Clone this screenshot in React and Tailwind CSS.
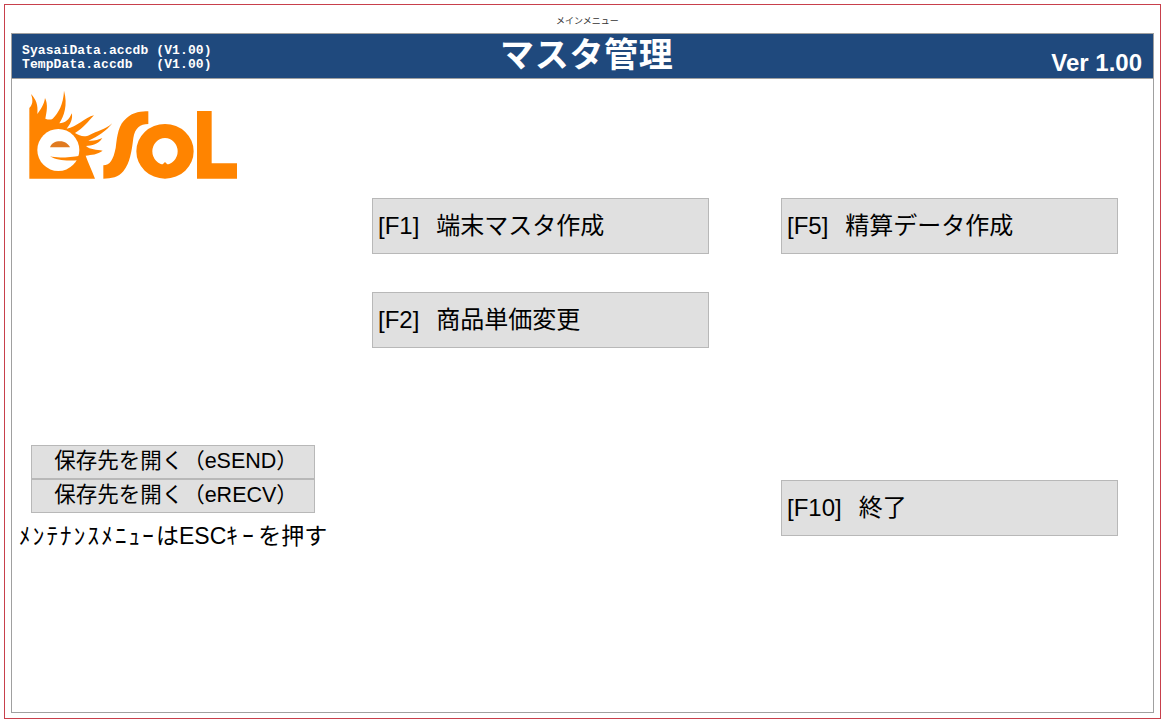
import React from 'react';

const JP = "font-['Liberation_Sans','Noto_Sans_CJK_JP',sans-serif]";

function Logo() {
  return (
    <svg width="225" height="98" viewBox="0 0 675 294" className="block">
      {/* flame */}
      <path
        fill="#ff8400"
        d="M28 272 L28 60 C38 50 40 38 33 18 C48 35 55 50 52 78 C62 65 72 50 75 30 C85 50 80 72 76 92 C85 95 92 96 98 92 C115 75 130 50 132 8 C144 50 132 85 118 106 C135 106 148 95 155 76 C160 92 150 110 140 122 C170 118 195 88 222 82 C205 100 190 120 165 135 C180 145 195 148 210 140 C230 130 255 125 277 106 C258 130 235 145 205 158 C220 160 235 155 247 150 C235 170 215 172 198 174 C210 185 230 185 248 188 C232 200 215 200 197 203 C205 225 215 245 225 272 Z"
      />
      <circle cx="115" cy="186" r="63" fill="#fff" />
      <path fill="#e07a20" d="M90 178 C95 165 105 160 120 160 C135 160 145 168 150 178 Z" />
      <path fill="#ff8400" d="M90 205 C110 211 150 208 180 203 L177 216 C150 219 110 219 90 205 Z" />
      {/* S */}
      <path
        fill="#ff8400"
        d="M385 70 L385 108 C360 108 345 120 340 150 C335 190 330 225 310 250 C295 268 275 272 250 272 L250 232 C270 232 280 215 287 180 C292 140 295 110 320 90 C340 72 365 70 385 70 Z"
      />
      {/* O */}
      <path
        fill="#ff8400"
        fillRule="evenodd"
        d="M349 190 A86 82 0 1 0 521 190 A86 82 0 1 0 349 190 Z M397 190 A38 40 0 1 1 473 190 A38 40 0 1 1 397 190 Z"
      />
      <path fill="#ff8400" d="M425 232 L435 222 L445 232 Z" />
      {/* L */}
      <path fill="#ff8400" d="M531 69 L575 69 L575 226 L651 226 L651 272 L531 272 Z" />
    </svg>
  );
}

function FnButton({ label, text, className = '' }) {
  return (
    <button className={`flex items-center gap-[17px] w-[337px] h-[56px] pl-[5px] bg-[#e0e0e0] border border-[#b8b8b8] text-[24px] text-black ${className}`}>
      <span>{label}</span>
      <span>{text}</span>
    </button>
  );
}

function OpenButton({ text }) {
  return (
    <button className="flex items-center justify-center w-[284px] h-[34px] pb-[2px] pl-[6px] bg-[#e0e0e0] border border-[#b8b8b8] text-[21.5px] text-black whitespace-nowrap">
      {text}
    </button>
  );
}

export default function App() {
  return (
    <div className={`w-[1165px] h-[723px] bg-white p-[4px] ${JP}`}>
      <div className="flex flex-col h-full border border-[#c8404c] px-[6px] pb-[5px]">
        <div className="h-[28px] pl-[545px] pt-[9px] text-[9px] leading-[14px] text-[#333333]">メインメニュー</div>
        <div className="flex flex-col flex-1 border border-[#a0a0a0]">
          <div className="flex h-[44px] bg-[#1f497d] text-white">
            <div className="w-[488px] pl-[10px] pt-[10px] font-['Liberation_Mono',monospace] text-[13px] leading-[14px] tracking-[0.1px] font-bold whitespace-pre">
              <div>SyasaiData.accdb (V1.00)</div>
              <div>TempData.accdb   (V1.00)</div>
            </div>
            <div className="pt-[1px] text-[34px] leading-[40px] font-bold tracking-[0.7px]">マスタ管理</div>
            <div className="ml-auto pr-[11px] pt-[15px] text-[24px] leading-[28px] font-bold">Ver 1.00</div>
          </div>
          <div className="flex flex-1 border-t border-[#a0a0a0]">
            <div className="w-[360px] pl-[8px] pt-[9px]">
              <Logo />
              <div className="flex flex-col mt-[259px] ml-[11px]">
                <OpenButton text="保存先を開く（eSEND）" />
                <OpenButton text="保存先を開く（eRECV）" />
              </div>
              <div className="mt-[7px] -ml-[1px] text-[23px] leading-[32px] text-black whitespace-nowrap">
                <span className="tracking-[2.2px]">ﾒﾝﾃﾅﾝｽﾒﾆｭｰ</span>はESC<span className="tracking-[4.5px]">ｷｰ</span>を押す
              </div>
            </div>
            <div className="w-[409px] pt-[119px]">
              <FnButton label="[F1]" text="端末マスタ作成" />
              <FnButton label="[F2]" text="商品単価変更" className="mt-[38px]" />
            </div>
            <div className="pt-[119px]">
              <FnButton label="[F5]" text="精算データ作成" />
              <FnButton label="[F10]" text="終了" className="mt-[226px]" />
            </div>
          </div>
        </div>
      </div>
    </div>
  );
}
